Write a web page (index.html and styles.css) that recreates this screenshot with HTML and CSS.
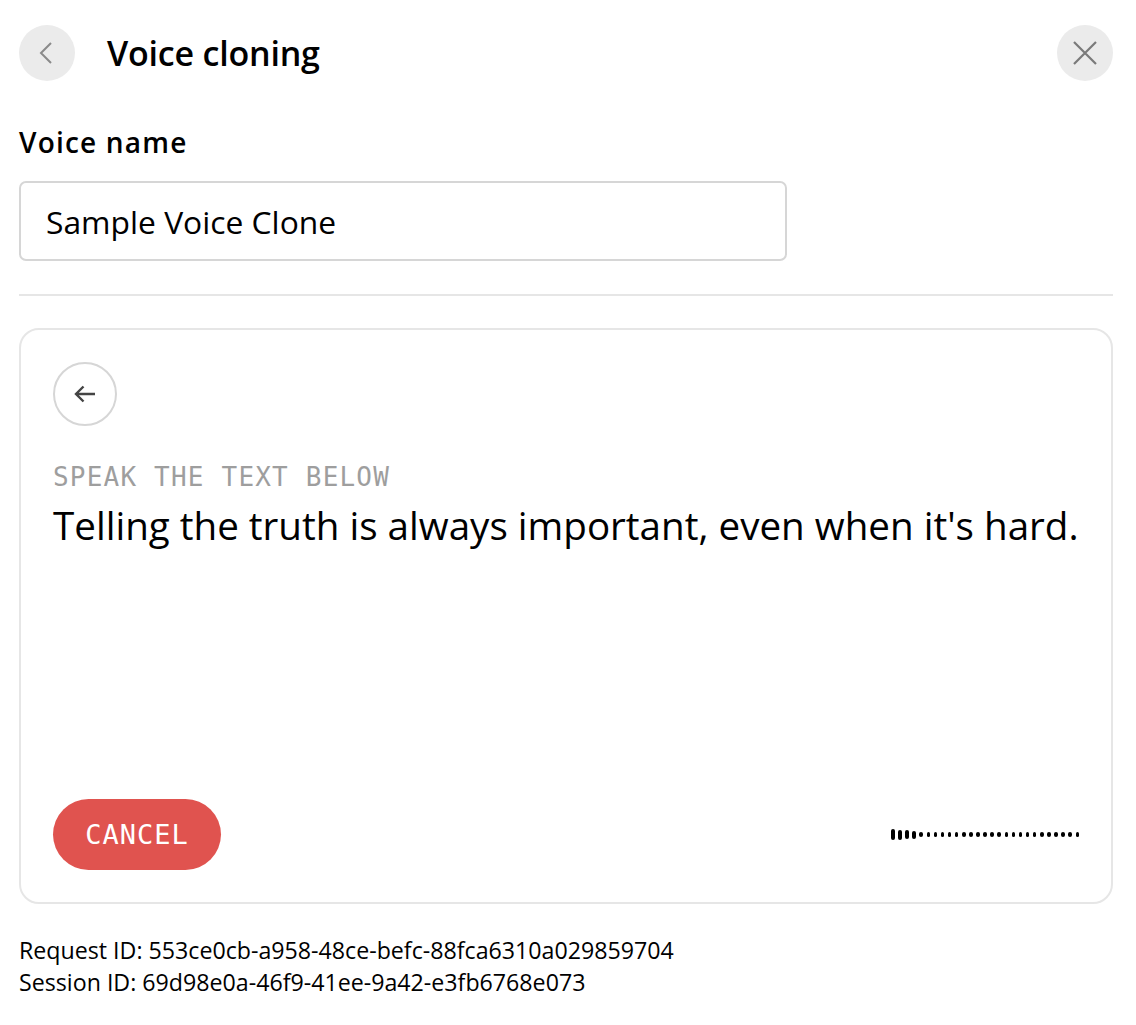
FILE: index.html
```html
<!DOCTYPE html>
<html lang="en">
<head>
    <meta charset="UTF-8">
    <meta name="viewport" content="width=device-width, initial-scale=1.0">
    <title>Voice cloning</title>
    <link rel="stylesheet" href="styles.css">
</head>
<body>
    <div id="page">
        <div class="header">
            <span class="round-btn">
                <svg width="24" height="24" viewBox="0 0 24 24"><path d="M16 2 L6 12 L16 22" fill="none" stroke="#8a8a8a" stroke-width="2"/></svg>
            </span>
            <h1 class="title">Voice cloning</h1>
            <span class="round-btn close">
                <svg width="26" height="26" viewBox="0 0 26 26"><path d="M2 2 L24 24 M24 2 L2 24" fill="none" stroke="#7a7a7a" stroke-width="2.2"/></svg>
            </span>
        </div>

        <div class="label">Voice name</div>
        <div class="input">Sample Voice Clone</div>

        <div class="divider"></div>

        <div class="card">
            <span class="arrow-btn">
                <svg width="24" height="24" viewBox="0 0 24 24"><path d="M22 12 H3 M10.5 4.5 L3 12 L10.5 19.5" fill="none" stroke="#444" stroke-width="2.4"/></svg>
            </span>
            <div class="hint">SPEAK THE TEXT BELOW</div>
            <div class="sentence">Telling the truth is always important, even when it's hard.</div>

            <div class="bottom">
                <span class="cancel">CANCEL</span>
                <div class="level" id="level"></div>
            </div>
        </div>

        <div class="ids">
            <div>Request ID: 553ce0cb-a958-48ce-befc-88fca6310a029859704</div>
            <div>Session ID: 69d98e0a-46f9-41ee-9a42-e3fb6768e073</div>
        </div>
    </div>

    <script>
        var oLevel = document.getElementById('level');
        var heights = [11, 10, 9, 8];
        for(var i = 0; i < 27; i ++){
            var oBar = document.createElement('i');
            oBar.style.height = (heights[i] || 4.5) + 'px';
            oLevel.appendChild(oBar);
        }
    </script>
</body>
</html>
```

FILE: styles.css
```css
*{
    margin: 0;
    padding: 0;
    box-sizing: border-box;
}
body{
    background: #ffffff;
    color: #000000;
    font-family: "Open Sans", "Liberation Sans", sans-serif;
}

#page{
    padding: 25px 23px 20px 19px;
}

.header{
    display: flex;
    align-items: center;
    height: 56px;
}
.round-btn{
    display: flex;
    align-items: center;
    justify-content: center;
    width: 56px;
    height: 56px;
    border-radius: 50%;
    background: #ebebeb;
}
.close{
    margin-left: auto;
}
.title{
    margin-left: 32px;
    font-size: 34px;
    font-weight: 600;
    letter-spacing: -0.2px;
}

.label{
    margin-top: 43px;
    font-size: 28px;
    font-weight: 600;
    letter-spacing: 1.2px;
    line-height: 36px;
}
.input{
    width: 768px;
    height: 80px;
    margin-top: 21px;
    padding-left: 25px;
    display: flex;
    align-items: center;
    border: 2px solid #d6d6d6;
    border-radius: 7px;
    font-size: 31.8px;
}

.divider{
    height: 2px;
    margin-top: 33px;
    background: #e6e6e6;
}

.card{
    display: flex;
    flex-direction: column;
    height: 576px;
    margin-top: 32px;
    padding: 32px;
    border: 2px solid #e6e6e6;
    border-radius: 20px;
}
.arrow-btn{
    display: flex;
    align-items: center;
    justify-content: center;
    width: 64px;
    height: 64px;
    border: 2px solid #d6d6d6;
    border-radius: 50%;
}
.hint{
    margin-top: 36px;
    font-family: "DejaVu Sans Mono", "Liberation Mono", monospace;
    font-size: 26px;
    letter-spacing: 1.2px;
    line-height: 30px;
    color: #9e9e9e;
}
.sentence{
    margin-top: 9px;
    font-size: 38.6px;
    line-height: 48px;
}

.bottom{
    margin-top: auto;
    display: flex;
    align-items: center;
    justify-content: space-between;
}
.cancel{
    display: flex;
    align-items: center;
    justify-content: center;
    width: 168px;
    height: 71px;
    border-radius: 36px;
    background: #e0534f;
    color: #ffffff;
    font-family: "DejaVu Sans Mono", "Liberation Mono", monospace;
    font-size: 27px;
    letter-spacing: 1px;
}
.level{
    display: flex;
    align-items: center;
    gap: 3.6px;
}
.level i{
    display: block;
    width: 3.5px;
    border-radius: 2px;
    background: #000000;
}

.ids{
    margin-top: 30px;
    font-size: 23.2px;
    line-height: 32px;
}
```
